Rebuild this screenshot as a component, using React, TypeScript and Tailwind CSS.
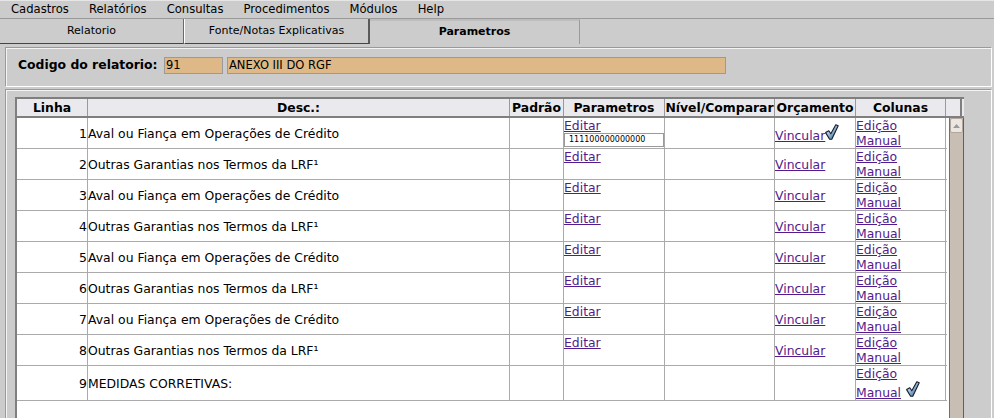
import React from 'react';

type Row = {
	n: number;
	desc: string;
	edit?: boolean;
	input?: string;
	vincular?: boolean;
	check?: boolean;
	lastCheck?: boolean;
};

const rows: Row[] = [
	{ n: 1, desc: 'Aval ou Fiança em Operações de Crédito', edit: true, input: '111100000000000', vincular: true, check: true },
	{ n: 2, desc: 'Outras Garantias nos Termos da LRF¹', edit: true, vincular: true },
	{ n: 3, desc: 'Aval ou Fiança em Operações de Crédito', edit: true, vincular: true },
	{ n: 4, desc: 'Outras Garantias nos Termos da LRF¹', edit: true, vincular: true },
	{ n: 5, desc: 'Aval ou Fiança em Operações de Crédito', edit: true, vincular: true },
	{ n: 6, desc: 'Outras Garantias nos Termos da LRF¹', edit: true, vincular: true },
	{ n: 7, desc: 'Aval ou Fiança em Operações de Crédito', edit: true, vincular: true },
	{ n: 8, desc: 'Outras Garantias nos Termos da LRF¹', edit: true, vincular: true },
	{ n: 9, desc: 'MEDIDAS CORRETIVAS:', lastCheck: true },
];

const menu = ['Cadastros', 'Relatórios', 'Consultas', 'Procedimentos', 'Módulos', 'Help'];

const cols = 'grid grid-cols-[71px_422px_54px_101px_110px_81px_90px]';

function Check({ id }: { id: string }) {
	return (
		<svg width="14" height="16" viewBox="0 0 14 16" className="inline-block align-baseline">
			<defs>
				<linearGradient id={id} x1="0" y1="0" x2="1" y2="1">
					<stop offset="0" stopColor="#eef4fb" />
					<stop offset="0.45" stopColor="#9dbddc" />
					<stop offset="1" stopColor="#23507f" />
				</linearGradient>
			</defs>
			<path
				d="M0.6 8.6 L3.8 6.8 L5.8 9.8 L10.8 0.7 L13.2 1.8 L6.8 15.3 L4.6 15.3 Z"
				fill={`url(#${id})`}
				stroke="#141d28"
				strokeWidth="1.1"
				strokeLinejoin="round"
			/>
		</svg>
	);
}

const link = 'text-[#551a8b] underline';

export default function App() {
	return (
		<div className="w-[994px] h-[418px] overflow-hidden bg-[#cccccc] text-black font-['DejaVu_Sans',sans-serif]">
			{/* menu bar */}
			<div className="flex h-[19px] items-center border-t border-t-[#e6e6e6] border-b border-b-[#9a9a9a] pl-px text-[11.6px]">
				{menu.map((m) => (
					<span key={m} className="px-[10px] leading-[17px]">
						{m}
					</span>
				))}
			</div>

			{/* tabs */}
			<div className="flex h-[25px] text-[11px]">
				<div className="w-[184px] flex items-center justify-center border-r border-r-[#6a6a6a] border-b border-b-[#444]">
					Relatorio
				</div>
				<div className="w-[186px] flex items-center justify-center border-l border-l-white border-r-2 border-r-[#5a5a5a] border-b border-b-[#444]">
					Fonte/Notas Explicativas
				</div>
				<div className="w-[210px] flex items-center justify-center font-bold border-t-2 border-t-[#bdbdbd] border-r border-r-[#9a9a9a]">
					Parametros
				</div>
				<div className="flex-1" />
			</div>

			{/* codigo panel */}
			<div className="ml-[5px] mt-[3px] w-[987px] h-[40px] border border-t-[#9a9a9a] border-l-[#9a9a9a] border-b-white border-r-white shadow-[inset_1px_1px_0_#f4f4f4] flex items-center pl-[12px] pb-[3px]">
				<span className="w-[146px] font-bold text-[12.4px]">Codigo do relatorio:</span>
				<div className="w-[59px] h-[17px] bg-[#deb887] border border-[#9a9a9a] text-[11.5px] leading-[15px] pl-[1px]">91</div>
				<div className="ml-[4px] w-[499px] h-[17px] bg-[#deb887] border border-[#9a9a9a] text-[11.5px] leading-[15px] pl-[1px]">
					ANEXO III DO RGF
				</div>
			</div>

			{/* table panel */}
			<div className="ml-[5px] mt-[2px] w-[987px] h-[340px] border border-t-[#9a9a9a] border-l-[#9a9a9a] border-b-white border-r-white shadow-[inset_1px_1px_0_#f4f4f4] pt-[7px] pl-[9px]">
				<div className="w-[949px] h-full flex flex-col border-l-2 border-l-[#7f7f7f]">
					{/* header */}
					<div className="flex h-[21px] border-t-2 border-b-2 border-[#7f7f7f] bg-[#e9e9ee] text-[12.4px] font-bold leading-[17px]">
						<div className={cols}>
							{['Linha', 'Desc.:', 'Padrão', 'Parametros', 'Nível/Comparar', 'Orçamento', 'Colunas'].map((h) => (
								<div key={h} className="border-r border-r-[#9a9a9a] text-center whitespace-nowrap overflow-hidden">
									{h}
								</div>
							))}
						</div>
						<div className="w-[16px] border-r-2 border-r-[#7f7f7f]" />
					</div>

					{/* body */}
					<div className="flex flex-1">
						<div className="w-[931px] bg-white">
							{rows.map((r) => (
								<div
									key={r.n}
									className={`${cols} ${r.lastCheck ? 'h-[35px]' : 'h-[31px]'} border-b border-b-[#aaaaaa] text-[12.4px] leading-[15px]`}
								>
									<div className="border-r border-r-[#aaaaaa] flex items-center justify-end">{r.n}</div>
									<div className="border-r border-r-[#aaaaaa] flex items-center whitespace-nowrap">{r.desc}</div>
									<div className="border-r border-r-[#aaaaaa]" />
									<div className="border-r border-r-[#aaaaaa] flex flex-col items-start">
										{r.edit && <span className={link}>Editar</span>}
										{r.input && (
											<div className="w-[100px] h-[14px] border border-[#9a9a9a] bg-white text-[8px] leading-[12px] pl-[4px]">
												{r.input}
											</div>
										)}
									</div>
									<div className="border-r border-r-[#aaaaaa]" />
									<div className="border-r border-r-[#aaaaaa] flex items-center">
										{r.vincular && (
											<span className="whitespace-nowrap">
												<span className={link}>Vincular</span>
												{r.check && <Check id="ck1" />}
											</span>
										)}
									</div>
									<div className="border-r border-r-[#aaaaaa]">
										<div className={link}>Edição</div>
										<div>
											<span className={link}>Manual</span>
											{r.lastCheck && (
												<>
													{' '}
													<span className="inline-block ml-[1px]">
														<Check id="ck2" />
													</span>
												</>
											)}
										</div>
									</div>
								</div>
							))}
						</div>
						<div className="w-[2px] bg-white" />
						{/* scrollbar */}
						<div className="w-[15px] flex flex-col border-l border-l-[#7a6d62] border-r border-r-[#6a5e54] bg-[#c9beb3]">
							<div className="h-[15px] bg-[#ebe6e1] border border-[#b3a69a] rounded-[2px] flex items-center justify-center">
								<svg width="7" height="4" viewBox="0 0 7 4">
									<path d="M3.5 0 L7 4 L0 4 Z" fill="#9a9a9a" />
								</svg>
							</div>
						</div>
					</div>
				</div>
			</div>
		</div>
	);
}
